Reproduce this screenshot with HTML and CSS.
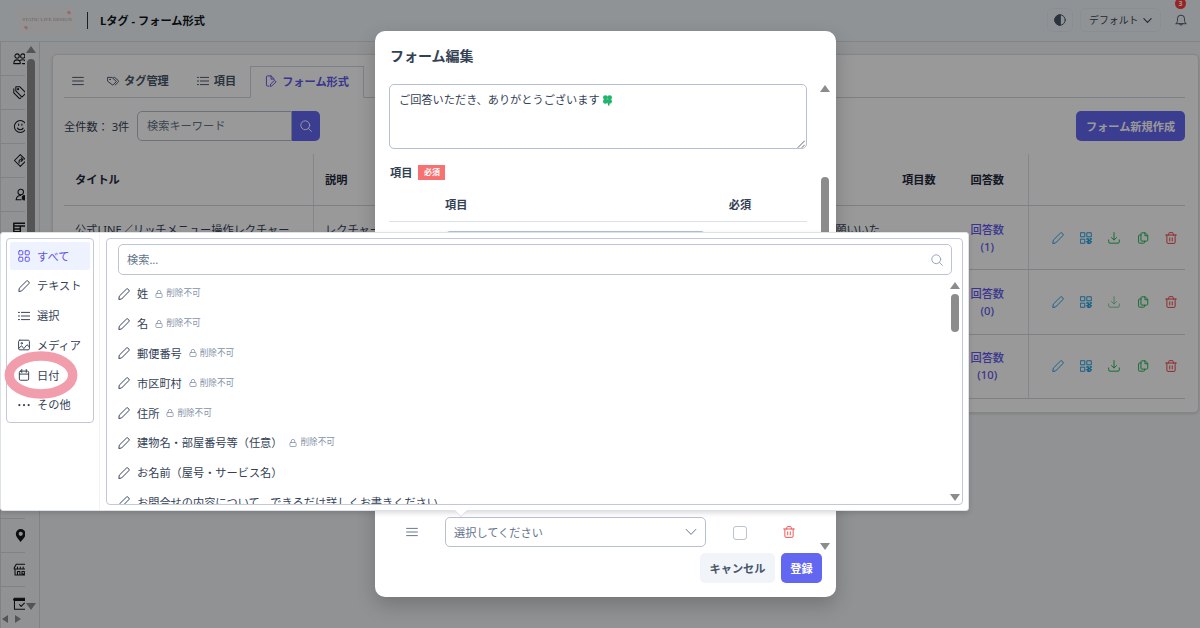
FILE: index.html
```html
<!DOCTYPE html>
<html lang="ja">
<head>
<meta charset="utf-8">
<title>Lタグ - フォーム形式</title>
<link rel="stylesheet" href="styles.css">
</head>
<body>
<svg class="sprite" aria-hidden="true">
  <symbol id="pencil" viewBox="0 0 16 16"><path d="M1.2 14.8l.5-3.9L11.2 1.5a1.5 1.5 0 0 1 2.1 0l1.2 1.2a1.5 1.5 0 0 1 0 2.1L5.1 14.3z"/></symbol>
  <symbol id="grid" viewBox="0 0 16 16"><rect x="1" y="1" width="5.4" height="5.4" rx="1"/><rect x="9.6" y="1" width="5.4" height="5.4" rx="1"/><rect x="1" y="9.6" width="5.4" height="5.4" rx="1"/><rect x="9.6" y="9.6" width="5.4" height="5.4" rx="1"/></symbol>
  <symbol id="list" viewBox="0 0 16 16"><path d="M4.5 3.2H15.5M4.5 8H15.5M4.5 12.8H15.5M.5 3.2H2M.5 8H2M.5 12.8H2"/></symbol>
  <symbol id="bars" viewBox="0 0 16 16"><path d="M.8 3.2H15.2M.8 8H15.2M.8 12.8H15.2"/></symbol>
  <symbol id="image" viewBox="0 0 16 16"><rect x=".8" y="1.6" width="14.4" height="12.8" rx="1.6"/><circle cx="5" cy="5.7" r="1"/><path d="M1 12.5L4.8 9l3 3.8L12 7.6l3 2.8"/></symbol>
  <symbol id="calendar" viewBox="0 0 16 16"><rect x="1.8" y="2.8" width="12.4" height="12.2" rx="1.6"/><path d="M1.8 6.8H14.2M5 .6V4.6M11 .6V4.6"/></symbol>
  <symbol id="dots" viewBox="0 0 16 16"><g fill="currentColor" stroke="none"><circle cx="1.8" cy="8" r="1.5"/><circle cx="8" cy="8" r="1.5"/><circle cx="14.2" cy="8" r="1.5"/></g></symbol>
  <symbol id="lock" viewBox="0 0 16 16"><rect x="1.8" y="7" width="12.4" height="8" rx="1.5"/><path d="M4.5 7V4.3a3.5 3.5 0 0 1 7 0V7"/></symbol>
  <symbol id="search" viewBox="0 0 16 16"><circle cx="7" cy="7" r="5.9"/><path d="M11.3 11.3L15.2 15.2"/></symbol>
  <symbol id="tag" viewBox="0 0 16 16"><path d="M1 3.2h5.6l6 5.4-4.4 4.6-1 0L1 8.4zM9 3.2h1.2l4.9 4.3a1.3 1.3 0 0 1 0 1.9L11 13.3"/><circle cx="4" cy="5.9" r=".5"/></symbol>
  <symbol id="form" viewBox="0 0 16 16"><path d="M5 14.8H3.4A1.5 1.5 0 0 1 1.9 13.300V2.700A1.500 1.500 0 0 1 3.400 1.200H8l4.500 4.300M8 1.200V5.500h3.500M7 14.800l.5-2.700 5.300-5.100 2 2.200-5.300 5z"/></symbol>
  <symbol id="trash" viewBox="0 0 16 16"><path d="M.8 4H15.200M2.500 4V13.700A1.500 1.500 0 0 0 4 15.200h8a1.500 1.500 0 0 0 1.500-1.500V4M5 4V2A1.200 1.200 0 0 1 6.200.8H9.800A1.200 1.200 0 0 1 11 2V4M6.300 7.800v4M9.700 7.800v4"/></symbol>
  <symbol id="qr" viewBox="0 0 16 16"><path d="M1 1h5.400v5.400H1zM9.600 1H15v5.400H9.600zM1 9.600h5.400V15H1z"/><path d="M9 9.300h2.200M13.500 9.300h2M11 11.200h2.400M9 13h2.200M13.500 13h2M10.500 15h3" stroke-width="1.8"/></symbol>
  <symbol id="download" viewBox="0 0 16 16"><path d="M8 .8V10.500M4.600 7.400L8 10.700l3.400-3.300M.9 10.600v2.600A1.700 1.700 0 0 0 2.600 14.900H13.400a1.700 1.700 0 0 0 1.700-1.700V10.600"/></symbol>
  <symbol id="copy" viewBox="0 0 16 16"><path d="M10.800 12.200H6.600A1.300 1.300 0 0 1 5.300 10.900V2.400A1.300 1.300 0 0 1 6.600 1.100H11l3.300 3.300v6.500A1.300 1.300 0 0 1 13 12.200zM10.500 1.300V5H14M5.300 4H3.400A1.300 1.300 0 0 0 2.100 5.300v8.300A1.300 1.300 0 0 0 3.400 14.900H9a1.300 1.300 0 0 0 1.300-1.300V12.200"/></symbol>
  <symbol id="chevron" viewBox="0 0 16 16"><path d="M1.500 4.500L8 11.200l6.500-6.700"/></symbol>
  <symbol id="bell" viewBox="0 0 16 16"><path d="M1.300 12.600c1.400-1.200 2-2 2-3.800V6.200a4.700 4.700 0 0 1 9.400 0V8.800c0 1.800.6 2.600 2 3.800zM6 12.900a2 2 0 0 0 4 0"/></symbol>
  <symbol id="contrast" viewBox="0 0 16 16"><circle cx="8" cy="8" r="7"/><path d="M8 1a7 7 0 0 0 0 14z" fill="currentColor"/></symbol>
  <symbol id="users" viewBox="0 0 16 16"><circle cx="5" cy="5" r="2.700"/><circle cx="12" cy="5" r="2.700"/><path d="M1 14.300c0-3 1.500-4.600 4-4.600s4 1.600 4 4.600zM8.500 10.500C9.300 9.900 10.500 9.600 12 9.600c2.500 0 4 1.700 4 4.700h-4.500"/></symbol>
  <symbol id="tags" viewBox="0 0 16 16"><path d="M3.500 1h5L16 8.600l-5 5-7.500-7.500zM1 3.500V8.600l7 7 1.500-.8"/><circle cx="6.300" cy="3.900" r=".7"/></symbol>
  <symbol id="smile" viewBox="0 0 16 16"><circle cx="9" cy="8" r="7.300"/><path d="M5.500 10c1.500 2.600 5.500 2.600 7 0M7 5v1.600M11 5v1.600"/></symbol>
  <symbol id="turn" viewBox="0 0 16 16"><path d="M9 .8l7.200 7.200L9 15.200 1.800 8zM7.500 11V8.500A1.500 1.500 0 0 1 9 7h2.500M10 4.800L12.300 7 10 9.200"/></symbol>
  <symbol id="usercog" viewBox="0 0 16 16"><circle cx="9.500" cy="5" r="3.400"/><path d="M4 14.500c0-3.300 2-5.300 5.500-5.300M3.600 14.500H10"/><circle cx="14" cy="12" r="2.600" fill="currentColor"/></symbol>
  <symbol id="rich" viewBox="0 0 16 16"><path d="M1 1.500h15v13H1zM1 5h15M1 8.500h8M1 12h8M9 5v9" stroke-width="1.800"/></symbol>
  <symbol id="pin" viewBox="0 0 16 16"><path d="M9.500 0A6 6 0 0 0 3.500 6c0 4 4 7 6 10 2-3 6-6 6-10A6 6 0 0 0 9.500 0zm0 3.300a2.600 2.600 0 1 1 0 5.200 2.600 2.600 0 0 1 0-5.200z" fill="currentColor" stroke="none"/></symbol>
  <symbol id="store" viewBox="0 0 16 16"><path d="M4 1.500h12M4 1.500L1.500 6v1.500h14.500M5.500 7.500V5M9 7.500V5M12.500 7.500V5M2.500 8v6.800H16M5.500 14.500v-4h3v4M11 10.500h3v3h-3z"/></symbol>
  <symbol id="calcheck" viewBox="0 0 16 16"><path d="M16 15H1.800V1.500H16M8 9.500l2 2 4-4"/><path d="M1.800 3.200H16" stroke-width="3.500"/></symbol>
</svg>

<div class="app">
  <header class="topbar">
    <div class="logo"><i class="petal petal-top"></i><span>STATIC LIFE DESIGN</span><i class="petal petal-low"></i></div>
    <h1>Lタグ - フォーム形式</h1>
    <div class="tools">
      <span class="tool round"><svg class="ic"><use href="#contrast"/></svg></span>
      <span class="tool preset">デフォルト<svg class="ic small"><use href="#chevron"/></svg></span>
      <span class="bell"><svg class="ic"><use href="#bell"/></svg><b>3</b></span>
    </div>
  </header>
  <div class="main">
    <aside class="sidebar">
      <nav>
        <a><svg><use href="#users"/></svg></a>
        <a><svg><use href="#tags"/></svg></a>
        <a><svg><use href="#smile"/></svg></a>
        <a><svg><use href="#turn"/></svg></a>
        <a><svg><use href="#usercog"/></svg></a>
        <a><svg><use href="#rich"/></svg></a>
        <a></a><a></a><a></a><a></a><a></a><a></a><a></a><a></a>
        <a><svg><use href="#pin"/></svg></a>
        <a><svg><use href="#store"/></svg></a>
        <a><svg><use href="#calcheck"/></svg></a>
      </nav>
      <div class="scroll"><i class="up"></i><i class="thumb"></i><i class="down"></i></div>
      <div class="hscroll"><i class="left"></i><i class="right"></i></div>
    </aside>
    <section class="card">
      <div class="tabs">
        <span class="tab"><svg class="ic"><use href="#bars"/></svg></span>
        <span class="tab"><svg class="ic"><use href="#tag"/></svg>タグ管理</span>
        <span class="tab"><svg class="ic"><use href="#list"/></svg>項目</span>
        <span class="tab active"><svg class="ic"><use href="#form"/></svg>フォーム形式</span>
        <span class="rest"></span>
      </div>
      <div class="filter">
        <span class="count">全件数： 3件</span>
        <span class="keyword">検索キーワード</span>
        <span class="go"><svg class="ic"><use href="#search"/></svg></span>
        <button class="primary create">フォーム新規作成</button>
      </div>
      <div class="table">
        <div class="tr head"><div class="td line">タイトル</div><div class="td">説明</div><div class="td num">項目数</div><div class="td center line">回答数</div><div class="td"></div></div>
        <div class="tr"><div class="td line top">公式LINE／リッチメニュー操作レクチャー</div><div class="td top spread"><span>レクチャー</span><span>願いいた</span></div><div class="td"></div><div class="td center line link"><span>回答数<br>(1)</span></div>
          <div class="td acts"><svg class="ic sky"><use href="#pencil"/></svg><svg class="ic sky"><use href="#qr"/></svg><svg class="ic green"><use href="#download"/></svg><svg class="ic green"><use href="#copy"/></svg><svg class="ic red"><use href="#trash"/></svg></div></div>
        <div class="tr"><div class="td line"></div><div class="td"></div><div class="td"></div><div class="td center line link"><span>回答数<br>(0)</span></div>
          <div class="td acts"><svg class="ic sky"><use href="#pencil"/></svg><svg class="ic sky"><use href="#qr"/></svg><svg class="ic green off"><use href="#download"/></svg><svg class="ic green"><use href="#copy"/></svg><svg class="ic red"><use href="#trash"/></svg></div></div>
        <div class="tr"><div class="td line"></div><div class="td"></div><div class="td"></div><div class="td center line link"><span>回答数<br>(10)</span></div>
          <div class="td acts"><svg class="ic sky"><use href="#pencil"/></svg><svg class="ic sky"><use href="#qr"/></svg><svg class="ic green"><use href="#download"/></svg><svg class="ic green"><use href="#copy"/></svg><svg class="ic red"><use href="#trash"/></svg></div></div>
      </div>
    </section>
  </div>
</div>

<div class="mask"></div>

<div class="dialog">
  <h2>フォーム編集</h2>
  <div class="dialog-body">
    <div class="fields">
      <div class="textarea">ご回答いただき、ありがとうございます<svg class="clover" viewBox="0 0 12 12"><path class="stem" d="M6 6l1.500 5.500"/><circle cx="3.700" cy="3.300" r="2.600"/><circle cx="8.300" cy="3.300" r="2.600"/><circle cx="3.700" cy="7.500" r="2.600"/><circle cx="8.300" cy="7.500" r="2.600"/></svg>
        <svg class="grip" viewBox="0 0 8 8"><path d="M1 7.500L7.500 1M5 7.500L7.500 5"/></svg></div>
      <div class="label">項目<span class="badge">必須</span></div>
      <div class="item head"><span></span><span>項目</span><span class="mid">必須</span><span></span></div>
      <div class="item"><span></span><span class="select"></span><span></span><span></span></div>
      <div class="item last"><svg class="ic handle"><use href="#bars"/></svg><span class="select">選択してください<svg class="ic"><use href="#chevron"/></svg></span><span class="mid"><i class="check"></i></span><span class="mid"><svg class="ic bright"><use href="#trash"/></svg></span></div>
    </div>
    <div class="scroll"><i class="up"></i><i class="thumb"></i><i class="down"></i></div>
  </div>
  <div class="actions"><button class="cancel">キャンセル</button><button class="primary">登録</button></div>
</div>

<div class="popover">
  <div class="cats-col">
    <div class="cats">
      <div class="cat on"><svg class="ic"><use href="#grid"/></svg>すべて</div>
      <div class="cat"><svg class="ic"><use href="#pencil"/></svg>テキスト</div>
      <div class="cat"><svg class="ic"><use href="#list"/></svg>選択</div>
      <div class="cat"><svg class="ic"><use href="#image"/></svg>メディア</div>
      <div class="cat"><svg class="ic"><use href="#calendar"/></svg>日付</div>
      <div class="cat"><svg class="ic"><use href="#dots"/></svg>その他</div>
    </div>
  </div>
  <div class="options">
    <div class="find">検索...<svg class="ic"><use href="#search"/></svg></div>
    <div class="opt-area">
      <div class="opts">
        <div class="opt"><svg class="ic"><use href="#pencil"/></svg>姓<small><svg><use href="#lock"/></svg>削除不可</small></div>
        <div class="opt"><svg class="ic"><use href="#pencil"/></svg>名<small><svg><use href="#lock"/></svg>削除不可</small></div>
        <div class="opt"><svg class="ic"><use href="#pencil"/></svg>郵便番号<small><svg><use href="#lock"/></svg>削除不可</small></div>
        <div class="opt"><svg class="ic"><use href="#pencil"/></svg>市区町村<small><svg><use href="#lock"/></svg>削除不可</small></div>
        <div class="opt"><svg class="ic"><use href="#pencil"/></svg>住所<small><svg><use href="#lock"/></svg>削除不可</small></div>
        <div class="opt"><svg class="ic"><use href="#pencil"/></svg>建物名・部屋番号等（任意）<small><svg><use href="#lock"/></svg>削除不可</small></div>
        <div class="opt"><svg class="ic"><use href="#pencil"/></svg>お名前（屋号・サービス名）</div>
        <div class="opt"><svg class="ic"><use href="#pencil"/></svg>お問合せの内容について、できるだけ詳しくお書きください。</div>
      </div>
      <div class="scroll"><i class="up"></i><i class="thumb"></i><i class="down"></i></div>
    </div>
  </div>
</div>
<svg class="ring" viewBox="0 0 74 48"><ellipse cx="37" cy="24" rx="31.700" ry="19"/></svg>
</body>
</html>
```

FILE: styles.css
```css
* { box-sizing: border-box; }
body {
  margin: 0; width: 1200px; height: 628px; overflow: hidden; position: relative;
  font: 11.2px/17px "Noto Sans", "Noto Sans CJK JP", sans-serif; color: #334155;
  background: #f1f4f6;
}
h1, h2 { margin: 0; }
button { font: inherit; border: 0; padding: 0; color: inherit; white-space: nowrap; }
.sprite { position: absolute; width: 0; height: 0; }
svg { fill: none; stroke: currentColor; stroke-width: 1.3; stroke-linecap: round; stroke-linejoin: round; flex: none; }
.ic { width: 12px; height: 12px; display: block; }
.ic.small { width: 9px; height: 9px; stroke-width: 2; }

.app { height: 628px; display: flex; flex-direction: column; }
.topbar { height: 42px; flex: none; display: flex; align-items: center; background: #eef6fb; border-bottom: 1px solid #d6dee4; padding: 0 13px 1px 18px; }
.logo { width: 58px; height: 26px; background: #f6f3f3; font: 5px/26px "Liberation Serif", serif; text-align: center; color: #b3a5a8; letter-spacing: .1px; position: relative; white-space: nowrap; }
.petal { position: absolute; width: 4px; height: 3px; border-radius: 50%; background: #ffb0bb; transform: rotate(40deg); }
.petal-top { right: 5px; top: 4px; }
.petal-low { left: 6px; bottom: 4px; }
.topbar h1 { font-size: 11.2px; line-height: 17px; color: #0f1318; margin-left: 11px; padding-left: 12px; border-left: 1px solid #333; }
.tools { margin-left: auto; display: flex; align-items: center; color: #475569; }
.tool { height: 24px; border: 1px solid #e5edf3; border-radius: 5px; display: flex; align-items: center; }
.round { width: 26px; justify-content: center; margin-right: 7px; }
.preset { width: 81px; padding: 0 8px; justify-content: space-between; font-size: 9.900px; margin-right: 14px; color: #3d4654; }
.bell { position: relative; padding: 0; }
.bell b { position: absolute; left: 1px; top: -16px; left: 0; width: 11px; height: 11px; border-radius: 50%; background: #ff3b3b; color: #fff; font-size: 7px; line-height: 11px; text-align: center; }

.main { flex: 1; display: flex; align-items: flex-start; min-height: 0; }
.sidebar { width: 40px; height: 586px; border-right: 1px solid #d5dbe0; border-left: 1px solid #d5dbe0; display: grid; grid-template: 571px 15px / 24px 1fr; overflow: hidden; }
.sidebar nav { overflow: hidden; color: #15181c; }
.sidebar a { display: flex; align-items: center; height: 34.050px; padding-left: 12px; border-bottom: 1px solid #d5dbe0; }
.sidebar a svg { width: 13px; height: 13px; }
.scroll { display: flex; flex-direction: column; align-items: center; color: #8c8c8c; }
.scroll .up, .scroll .down { border: 5px solid transparent; width: 0; flex: none; }
.scroll .up { border-bottom: 7px solid currentColor; border-top: 0; }
.scroll .down { border-top: 7px solid currentColor; border-bottom: 0; margin-top: auto; }
.scroll .thumb { width: 8px; border-radius: 4px; background: currentColor; flex: none; }
.sidebar .scroll { padding: 4px 2px 3px 0; }
.sidebar .thumb { margin-top: 6px; height: 440px; }
.hscroll { grid-column: 1 / 3; display: flex; gap: 7px; padding: 2px 0 0 1px; color: #8c8c8c; }
.hscroll i { border: 4px solid transparent; height: 0; }
.hscroll .left { border-right: 6px solid currentColor; border-left: 0; }
.hscroll .right { border-left: 6px solid currentColor; border-right: 0; }

.card { margin: 12px 0 0 12px; width: 1147px; height: 359px; background: #fff; border: 1px solid #dcdfe2; border-radius: 5px; box-shadow: 0 1px 3px #0002; padding: 10px 13px 0 11px; }
.tabs { display: flex; height: 32px; margin-top: 1px; color: #475569; font-weight: 600; }
.tab { display: flex; align-items: center; gap: 5px; padding: 0 14px 2px; border-bottom: 1px solid #d0d7df; }
.tab:first-child { padding-left: 8px; padding-right: 9px; }
.tab .ic { margin: 0; }
.tab.active { color: #6058ee; border: 1px solid #d0d7df; border-bottom-color: transparent; }
.rest { flex: 1; border-bottom: 1px solid #d0d7df; }
.filter { display: flex; align-items: center; height: 30px; margin-top: 13px; }
.count { width: 73px; white-space: pre; }
.keyword { width: 155px; height: 30px; border: 1px solid #b5bfcc; border-radius: 5px 0 0 5px; padding: 5px 9px; color: #64748b; }
.go { width: 28px; height: 30px; background: #6366f1; border-radius: 0 5px 5px 0; display: grid; place-items: center; color: #fff; }
.primary { background: #6366f1; color: #fff; border-radius: 5px; height: 30px; font-weight: 600; }
.create { width: 109px; margin-left: auto; }
.table { margin-top: 13px; }
.tr { display: grid; grid-template-columns: 250px 577px 56px 81.500px 1fr; height: 64.300px; border-bottom: 1px solid #d0d5dc; }
.tr.head { height: 52px; font-weight: 700; color: #1e293b; }
.td { padding: 0 11px; display: flex; align-items: center; white-space: nowrap; }
.td.line { border-right: 1px solid #dde1e6; }
.td.top { align-items: flex-start; padding-top: 15px; }
.td.spread { justify-content: space-between; }
.td.num { white-space: normal; text-align: right; word-break: break-all; }
.td.center { justify-content: center; text-align: center; }
.link { color: #6058ee; font-weight: 500; }
.acts { padding-left: 23px; gap: 16.400px; }
.sky { color: #1f9de0; }
.green { color: #22b455; }
.red { color: #ef4444; }
.off { opacity: .6; }

.mask { position: absolute; inset: 0; background: rgba(0, 0, 0, .4); }

.dialog { position: absolute; left: 375px; top: 31px; width: 461px; height: 566px; background: #fff; border-radius: 10px; box-shadow: 0 8px 20px rgba(0, 0, 0, .2); padding: 15px 14px 14px 14px; display: flex; flex-direction: column; }
.dialog h2 { font-size: 14px; line-height: 20px; padding-left: 1px; font-weight: 700; }
.dialog-body { margin: 18px -11px 0 0; height: 467px; flex: none; display: flex; justify-content: space-between; }
.fields { width: 418px; display: flex; flex-direction: column; }
.textarea { position: relative; height: 65px; border: 1px solid #b6c0d3; border-radius: 5px; padding: 6px 9px; display: flex; align-items: flex-start; flex: none; }
.clover { width: 11px; height: 12px; margin: 3px 0 0 2px; fill: #1fb56d; stroke: none; }
.clover .stem { stroke: #1f9d60; stroke-width: 1.500; }
.grip { position: absolute; right: 1px; bottom: 0; width: 8px; height: 8px; stroke: #555; stroke-width: .9; }
.label { display: flex; align-items: center; gap: 6px; height: 17px; margin-top: 15px; font-weight: 700; padding-left: 1px; }
.badge { width: 27px; height: 15px; background: #f87171; color: #fff; font-size: 8px; line-height: 14px; text-align: center; }
.item { display: grid; grid-template-columns: 56px 261px 68px 1fr; height: 48px; align-items: center; flex: none; }
.item.head { height: 34px; margin-top: 7px; font-weight: 700; border-bottom: 1px solid #dbe1ea; }
.item.last { margin-top: auto; height: 38px; align-items: end; padding-bottom: 4px; }
.mid { display: grid; place-items: center; height: 30px; }
.item:last-child .mid:last-child { padding-right: 3px; }
.handle { margin: 0 0 9px 17px; color: #64748b; }
.select { height: 30px; border: 1px solid #b6c0ce; border-radius: 5px; display: flex; align-items: center; justify-content: space-between; padding: 0 8px; color: #64748b; }
.check { width: 14px; height: 14px; border: 1px solid #b9c2d0; border-radius: 3px; margin-top: 2px; }
.bright { color: #ef5350; }
.dialog .thumb { margin-top: 85px; height: 60px; }
.dialog .scroll { width: 16px; padding: 1px 0 1px; color: #8c8c8c; }
.actions { display: flex; justify-content: flex-end; gap: 6px; margin-top: 2px; }
.cancel { width: 75px; height: 30px; border-radius: 5px; background: #f1f5f9; color: #475569; font-weight: 600; }
.actions .primary { width: 41px; }

.popover { position: absolute; left: 0; top: 232px; width: 969px; height: 279px; background: #fff; border: 1px solid #dde1e8; border-radius: 3px; box-shadow: 0 2px 5px rgba(0, 0, 0, .15); display: flex; padding: 5px; gap: 6px; }
.popover::after { content: ""; position: absolute; left: 454px; top: 277px; border: 6px solid transparent; border-top-color: #fff; border-bottom: 0; filter: drop-shadow(0 1px 0 #d5dae2); }
.cats-col { width: 94px; border-right: 1px solid #f0f2f6; margin: -5px 0; padding-top: 5px; }
.cats { width: 88px; height: 185px; border: 1px solid #c2c8da; border-radius: 4px; padding: 3px; display: flex; flex-direction: column; gap: 1.800px; }
.cat { height: 28px; display: flex; align-items: center; gap: 7px; padding-left: 8px; }
.cat.on { background: #eef2ff; color: #6053e2; border-radius: 2px; }
.options { flex: 1; height: 267px; border: 1px solid #c2c8da; border-radius: 4px; padding: 5px 0 0 11px; display: flex; flex-direction: column; overflow: hidden; }
.find { width: 834px; height: 31px; flex: none; border: 1px solid #bcc5d6; border-radius: 5px; padding: 0 8px; display: flex; align-items: center; justify-content: space-between; color: #64748b; }
.find .ic { color: #94a3b8; }
.opt-area { flex: 1; min-height: 0; display: flex; justify-content: space-between; padding-top: 4px; }
.opts { overflow: hidden; }
.opt { height: 29.800px; display: flex; align-items: center; gap: 7px; white-space: nowrap; }
.opt small { display: flex; align-items: center; gap: 3px; font-size: 8.600px; color: #8592a8; }
.opt small svg { width: 8px; height: 8px; stroke-width: 1.600; }
.options .scroll { padding: 3px 2px 3px 0; }
.options .thumb { margin-top: 5px; height: 38px; }

.ring { position: absolute; left: 4px; top: 351px; width: 74px; height: 48px; stroke: #f19dab; stroke-width: 9.500; }
```
